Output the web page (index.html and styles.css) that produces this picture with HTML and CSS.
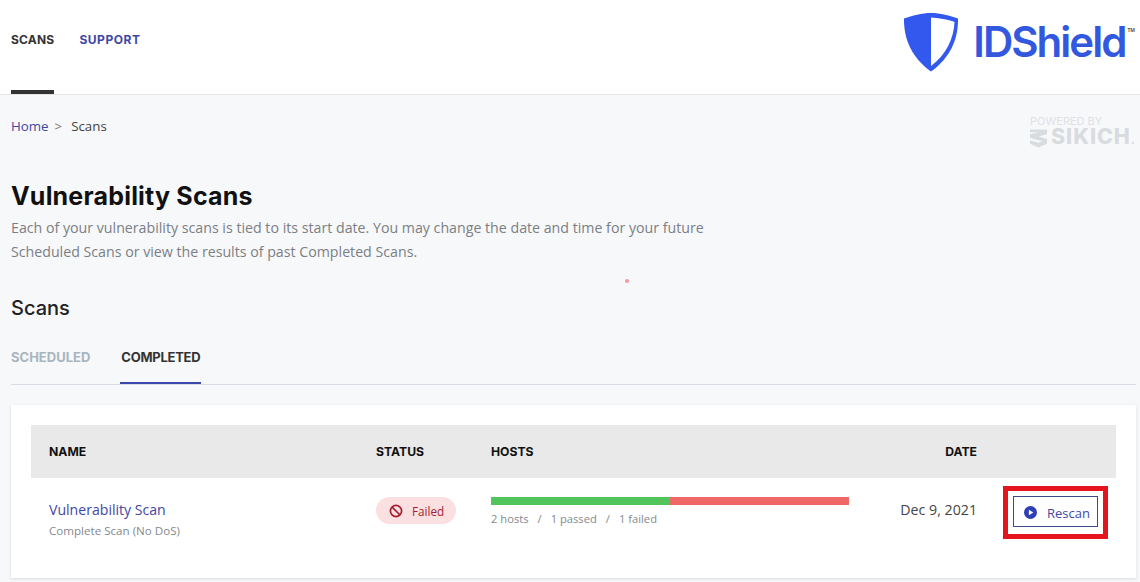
FILE: index.html
```html
<!DOCTYPE html>
<html lang="en">
<head>
<meta charset="utf-8">
<title>Vulnerability Scans</title>
<link rel="stylesheet" href="styles.css">
</head>
<body>
<header class="topbar">
  <nav class="nav">
    <a class="nav-link nav-active">SCANS</a>
    <a class="nav-link nav-support">SUPPORT</a>
  </nav>
  <div class="logo">
    <svg class="shield" width="56" height="60" viewBox="0 0 56 60">
      <path d="M28 1C37 1 47 3.500 55 6.500C55.500 27 47 46 28 59.500C9 46 .5 27 1 6.500C9 3.500 19 1 28 1Z" fill="#3358ee"/>
      <path d="M28 5.500C35 5.800 45 7.500 51.500 10C51 26 43 43 28 54Z" fill="#fff"/>
    </svg>
    <span class="logo-text">IDShield</span><span class="logo-tm">TM</span>
  </div>
</header>
<main class="page">
  <div class="crumb-row">
    <div class="crumbs"><a class="crumb-home">Home</a><span class="crumb-sep">&gt;</span><span>Scans</span></div>
    <div class="sikich">
      <span class="sikich-top">POWERED BY</span>
      <div class="sikich-main">
        <svg width="18" height="19" viewBox="0 0 18 19"><path d="M0 0H18V5L9 7.500 18 10V15L9 19 0 15V11.500L9 14 13 12.500 0 9V5L9 3H0Z" fill="#d9dcdf"/></svg>
        <span class="sikich-name">SIKICH<span class="sikich-dot">.</span></span>
      </div>
    </div>
  </div>
  <h1 class="title">Vulnerability Scans</h1>
  <p class="intro">Each of your vulnerability scans is tied to its start date. You may change the date and time for your future<br>Scheduled Scans or view the results of past Completed Scans.</p>
  <i class="dot"></i>
  <h2 class="subtitle">Scans</h2>
  <div class="tabs">
    <a class="tab">SCHEDULED</a>
    <a class="tab tab-active">COMPLETED</a>
  </div>
  <section class="card">
    <div class="row row-head">
      <div>NAME</div>
      <div>STATUS</div>
      <div>HOSTS</div>
      <div class="cell-date">DATE</div>
      <div></div>
    </div>
    <div class="row row-body">
      <div>
        <a class="scan-name">Vulnerability Scan</a>
        <div class="scan-type">Complete Scan (No DoS)</div>
      </div>
      <div>
        <span class="badge">
          <svg width="14" height="14" viewBox="0 0 14 14" fill="none" stroke="#a51f33" stroke-width="1.700"><circle cx="7" cy="7" r="5.600"/><path d="M3 3L11 11"/></svg>
          Failed
        </span>
      </div>
      <div>
        <div class="bar"><span class="bar-pass"></span><span class="bar-fail"></span></div>
        <div class="hosts"><span>2 hosts</span><span>/</span><span>1 passed</span><span>/</span><span>1 failed</span></div>
      </div>
      <div class="cell-date date-value">Dec 9, 2021</div>
      <div class="highlight">
        <button class="rescan" type="button">
          <svg width="13" height="13" viewBox="0 0 13 13"><circle cx="6.500" cy="6.500" r="6.500" fill="#2f3fb5"/><path d="M4.900 3.700L9.300 6.500 4.900 9.300Z" fill="#fff"/></svg>
          Rescan
        </button>
      </div>
    </div>
  </section>
</main>
</body>
</html>
```

FILE: styles.css
```css
* { box-sizing: border-box; }
html, body { margin: 0; height: 582px; overflow: hidden; }
body {
  background: #f7f8fa;
  font-family: "Open Sans", "Liberation Sans", sans-serif;
  color: #333;
}
.topbar {
  height: 95px;
  background: #fff;
  border-bottom: 1px solid #e2e4e6;
  display: flex;
  justify-content: space-between;
  padding: 0 5px 0 11px;
}
.nav { display: flex; gap: 25px; align-items: stretch; }
.nav-link {
  font-family: Inter, "Open Sans", sans-serif;
  font-size: 12px;
  font-weight: 700;
  padding-top: 32px;
  line-height: 15px;
  height: 94px;
}
.nav-active { color: #333; border-bottom: 4px solid #333; letter-spacing: .2px; }
.nav-support { color: #3f47a5; letter-spacing: .55px; }
.logo { display: flex; align-items: flex-start; padding-top: 12px; }
.shield { margin-right: 14px; }
.logo-text {
  font-family: Inter, sans-serif;
  font-size: 42px;
  font-weight: 600;
  letter-spacing: -2px;
  line-height: 60px;
  color: #3358e0;
}
.logo-tm { font-size: 5px; font-weight: 700; color: #555; margin: 14px 0 0 2px; line-height: 8px; }
.page { padding: 0 4px 0 11px; }
.crumb-row { display: flex; justify-content: space-between; height: 79px; padding-top: 21px; }
.crumbs { font-size: 13.300px; line-height: 20px; color: #444; }
.crumb-home { color: #3f47a5; }
.crumb-sep { color: #777; margin: 0 9px 0 6px; }
.sikich { width: 106px; flex: none; color: #dfe1e4; }
.sikich-top { display: block; font-family: Inter, sans-serif; font-size: 11px; line-height: 11px; letter-spacing: 0; }
.sikich-main { display: flex; align-items: center; gap: 4px; height: 20px; margin-top: 1px; }
.sikich-name { font-family: Inter, sans-serif; font-size: 21.500px; font-weight: 800; letter-spacing: .9px; color: #d9dcdf; line-height: 20px; white-space: nowrap; }
.sikich-dot { font-size: 12px; }
.title {
  margin: 6px 0 0;
  font-family: Inter, sans-serif;
  font-size: 25px;
  font-weight: 700;
  letter-spacing: .2px;
  line-height: 32px;
  color: #111;
}
.intro {
  margin: 4px 0 0;
  font-size: 14.200px;
  line-height: 24px;
  color: #7a7f85;
}
.dot {
  position: absolute;
  left: 625px;
  top: 279px;
  width: 4px;
  height: 4px;
  border-radius: 50%;
  background: #f49a9a;
}
.subtitle {
  margin: 30px 0 0;
  font-family: Inter, sans-serif;
  font-size: 20px;
  font-weight: 500;
  line-height: 28px;
  color: #222;
}
.tabs {
  display: flex;
  gap: 30px;
  height: 60px;
  margin-top: 3px;
  border-bottom: 1px solid #d8dce2;
  padding-top: 24px;
}
.tab {
  font-family: Inter, sans-serif;
  font-size: 13px;
  font-weight: 700;
  line-height: 17px;
  color: #a9b5bf;
}
.tab-active {
  color: #333;
  height: 35px;
  padding: 0 1px;
  letter-spacing: -.25px;
  border-bottom: 2px solid #3b47ad;
}
.card {
  margin-top: 20px;
  height: 173px;
  background: #fff;
  padding: 20px;
  box-shadow: 0 1px 3px rgba(0,0,0,.12);
}
.row { display: grid; grid-template-columns: 327px 115px 358px 128px 1fr; padding-left: 18px; }
.row-head {
  height: 53px;
  background: #e9e9e9;
  align-items: center;
  font-family: Inter, sans-serif;
  font-size: 12.200px;
  font-weight: 700;
  color: #111;
}
.row-body { padding-top: 8px; align-items: start; }
.cell-date { text-align: right; }
.scan-name { display: block; margin-top: 14px; font-size: 14.100px; line-height: 20px; color: #3f47a5; }
.scan-type { font-size: 11.600px; line-height: 16px; color: #85898e; margin-top: 3px; }
.badge {
  display: inline-flex;
  align-items: center;
  gap: 9px;
  height: 27px;
  margin-top: 11px;
  padding: 0 12px 0 13px;
  border-radius: 14px;
  background: #fbe0e1;
  color: #a51f33;
  font-size: 11.700px;
}
.bar { display: flex; width: 358px; height: 8px; margin-top: 11px; }
.bar-pass { flex: 1; background: #51c45c; }
.bar-fail { flex: 1; background: #ef6767; }
.hosts { display: flex; gap: 9px; margin-top: 6px; font-size: 11.200px; line-height: 16px; color: #85898e; }
.date-value { margin-top: 14px; font-size: 14.200px; line-height: 20px; color: #444; }
.highlight {
  margin: 0 0 0 26px;
  width: 105px;
  height: 53px;
  border: 5px solid #e5141f;
  padding: 5px;
}
.rescan {
  display: flex;
  align-items: center;
  gap: 10px;
  width: 85px;
  height: 31px;
  padding: 2px 0 0 10px;
  background: #fff;
  border: 1px solid #3a4a8c;
  border-radius: 0;
  font-family: "Open Sans", sans-serif;
  font-size: 13px;
  color: #3f47a5;
}
```
